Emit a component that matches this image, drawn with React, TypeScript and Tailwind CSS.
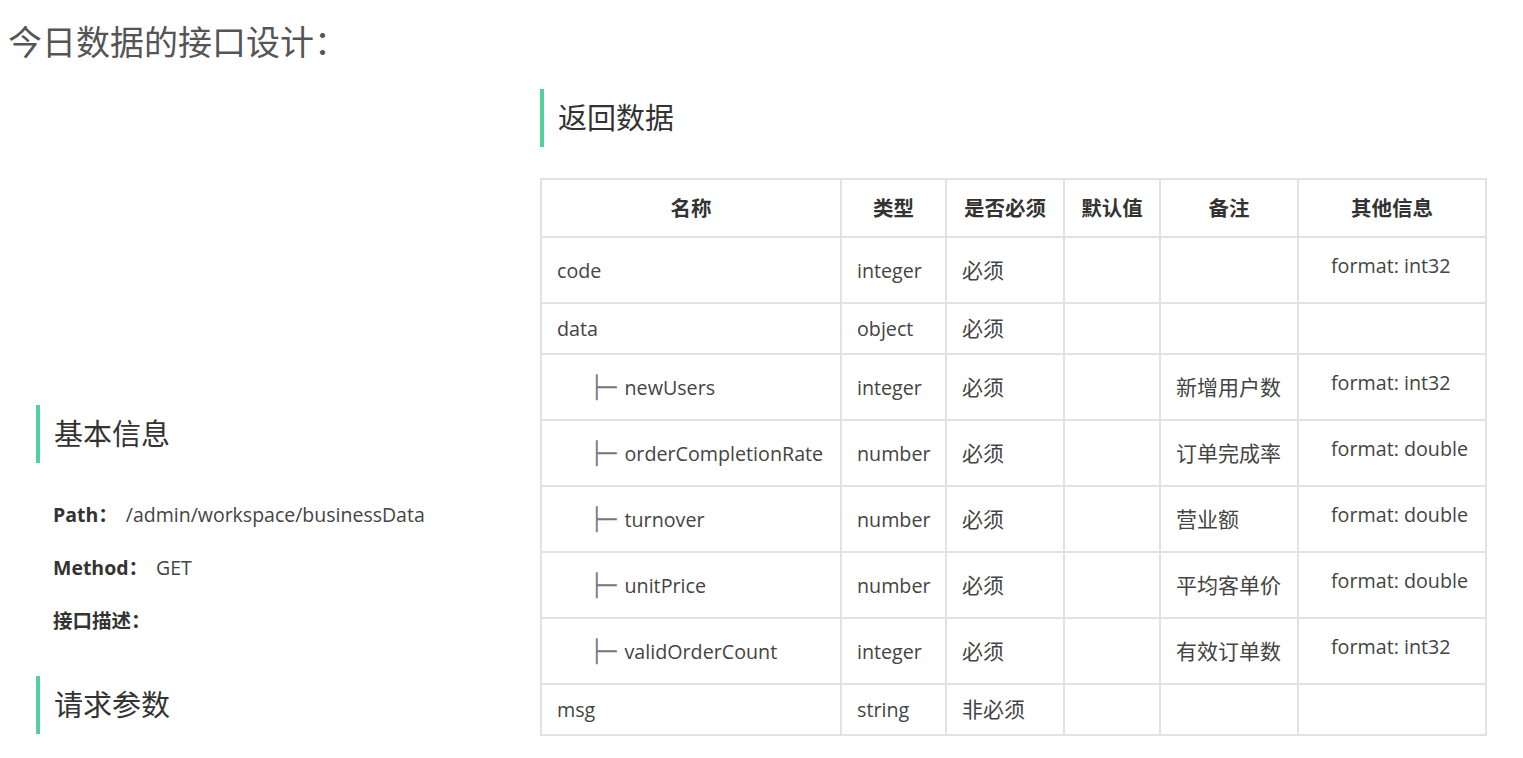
const font = { fontFamily: '"Open Sans", "Noto Sans CJK SC", sans-serif' };

type Row = {
  name: string;
  child?: boolean;
  type: string;
  required: string;
  note?: string;
  format?: string;
};

const rows: Row[] = [
  { name: "code", type: "integer", required: "必须", format: "format: int32" },
  { name: "data", type: "object", required: "必须" },
  { name: "newUsers", child: true, type: "integer", required: "必须", note: "新增用户数", format: "format: int32" },
  { name: "orderCompletionRate", child: true, type: "number", required: "必须", note: "订单完成率", format: "format: double" },
  { name: "turnover", child: true, type: "number", required: "必须", note: "营业额", format: "format: double" },
  { name: "unitPrice", child: true, type: "number", required: "必须", note: "平均客单价", format: "format: double" },
  { name: "validOrderCount", child: true, type: "integer", required: "必须", note: "有效订单数", format: "format: int32" },
  { name: "msg", type: "string", required: "非必须" },
];

function SectionTitle({ children }: { children: React.ReactNode }) {
  return (
    <div className="flex h-[58px] items-center border-l-4 border-[#52d19b] pl-[14px] text-[29px] text-[#333]">
      {children}
    </div>
  );
}

const th = "border-2 border-[#e2e2e2] pt-[14px] pb-[13px] text-center font-bold leading-[29px] text-[#333]";
const td = "border-2 border-[#e2e2e2] px-[15px] py-[10px] align-middle leading-[29px] text-[#444]";

export default function App() {
  return (
    <div className="min-h-screen bg-white text-[#333]" style={font}>
      <h2 className="ml-2 pt-[21px] text-[34px] leading-[42px] text-[#555]">今日数据的接口设计：</h2>

      <div className="mt-[26px] flex">
        {/* left: basic info */}
        <div className="flex w-[540px] flex-col justify-end pb-[2px] pl-9 text-[19.5px]">
          <SectionTitle>基本信息</SectionTitle>
          <div className="mt-[39px] flex flex-col gap-[27px] pl-[17px] leading-[26px]">
            <p>
              <span className="font-bold">Path：</span>
              <span className="ml-[8px] text-[#444]">/admin/workspace/businessData</span>
            </p>
            <p>
              <span className="font-bold">Method：</span>
              <span className="ml-[8px] text-[#444]">GET</span>
            </p>
            <p>
              <span className="font-bold">接口描述：</span>
            </p>
          </div>
          <div className="mt-[42px]">
            <SectionTitle>请求参数</SectionTitle>
          </div>
        </div>

        {/* right: response table */}
        <div className="flex flex-col">
          <SectionTitle>返回数据</SectionTitle>
          <table className="mt-[31px] w-[945px] table-fixed border-collapse text-[19.7px]">
            <colgroup>
              <col className="w-[300px]" />
              <col className="w-[105px]" />
              <col className="w-[118px]" />
              <col className="w-[96px]" />
              <col className="w-[138px]" />
              <col className="w-[188px]" />
            </colgroup>
            <thead>
              <tr className="text-[20.5px]">
                <th className={th}>名称</th>
                <th className={th}>类型</th>
                <th className={th}>是否必须</th>
                <th className={th}>默认值</th>
                <th className={th}>备注</th>
                <th className={th}>其他信息</th>
              </tr>
            </thead>
            <tbody>
              {rows.map((r) => (
                <tr key={r.name}>
                  <td className={td}>
                    {r.child ? (
                      <span className="flex items-center pl-[33px]">
                        <span
                          className="text-[22px] text-[#777]"
                          style={{ fontFamily: '"DejaVu Sans Mono", monospace' }}
                        >
                          ├─
                        </span>
                        <span className="ml-[8px]">{r.name}</span>
                      </span>
                    ) : (
                      r.name
                    )}
                  </td>
                  <td className={td}>{r.type}</td>
                  <td className={td}>
                    <span className="text-[21px]">{r.required}</span>
                  </td>
                  <td className={td}></td>
                  <td className={td}>
                    <span className="text-[21px]">{r.note}</span>
                  </td>
                  <td className={td}>
                    {r.format && <div className="pl-[17px] pt-[3px] pb-[12px]">{r.format}</div>}
                  </td>
                </tr>
              ))}
            </tbody>
          </table>
        </div>
      </div>
    </div>
  );
}
